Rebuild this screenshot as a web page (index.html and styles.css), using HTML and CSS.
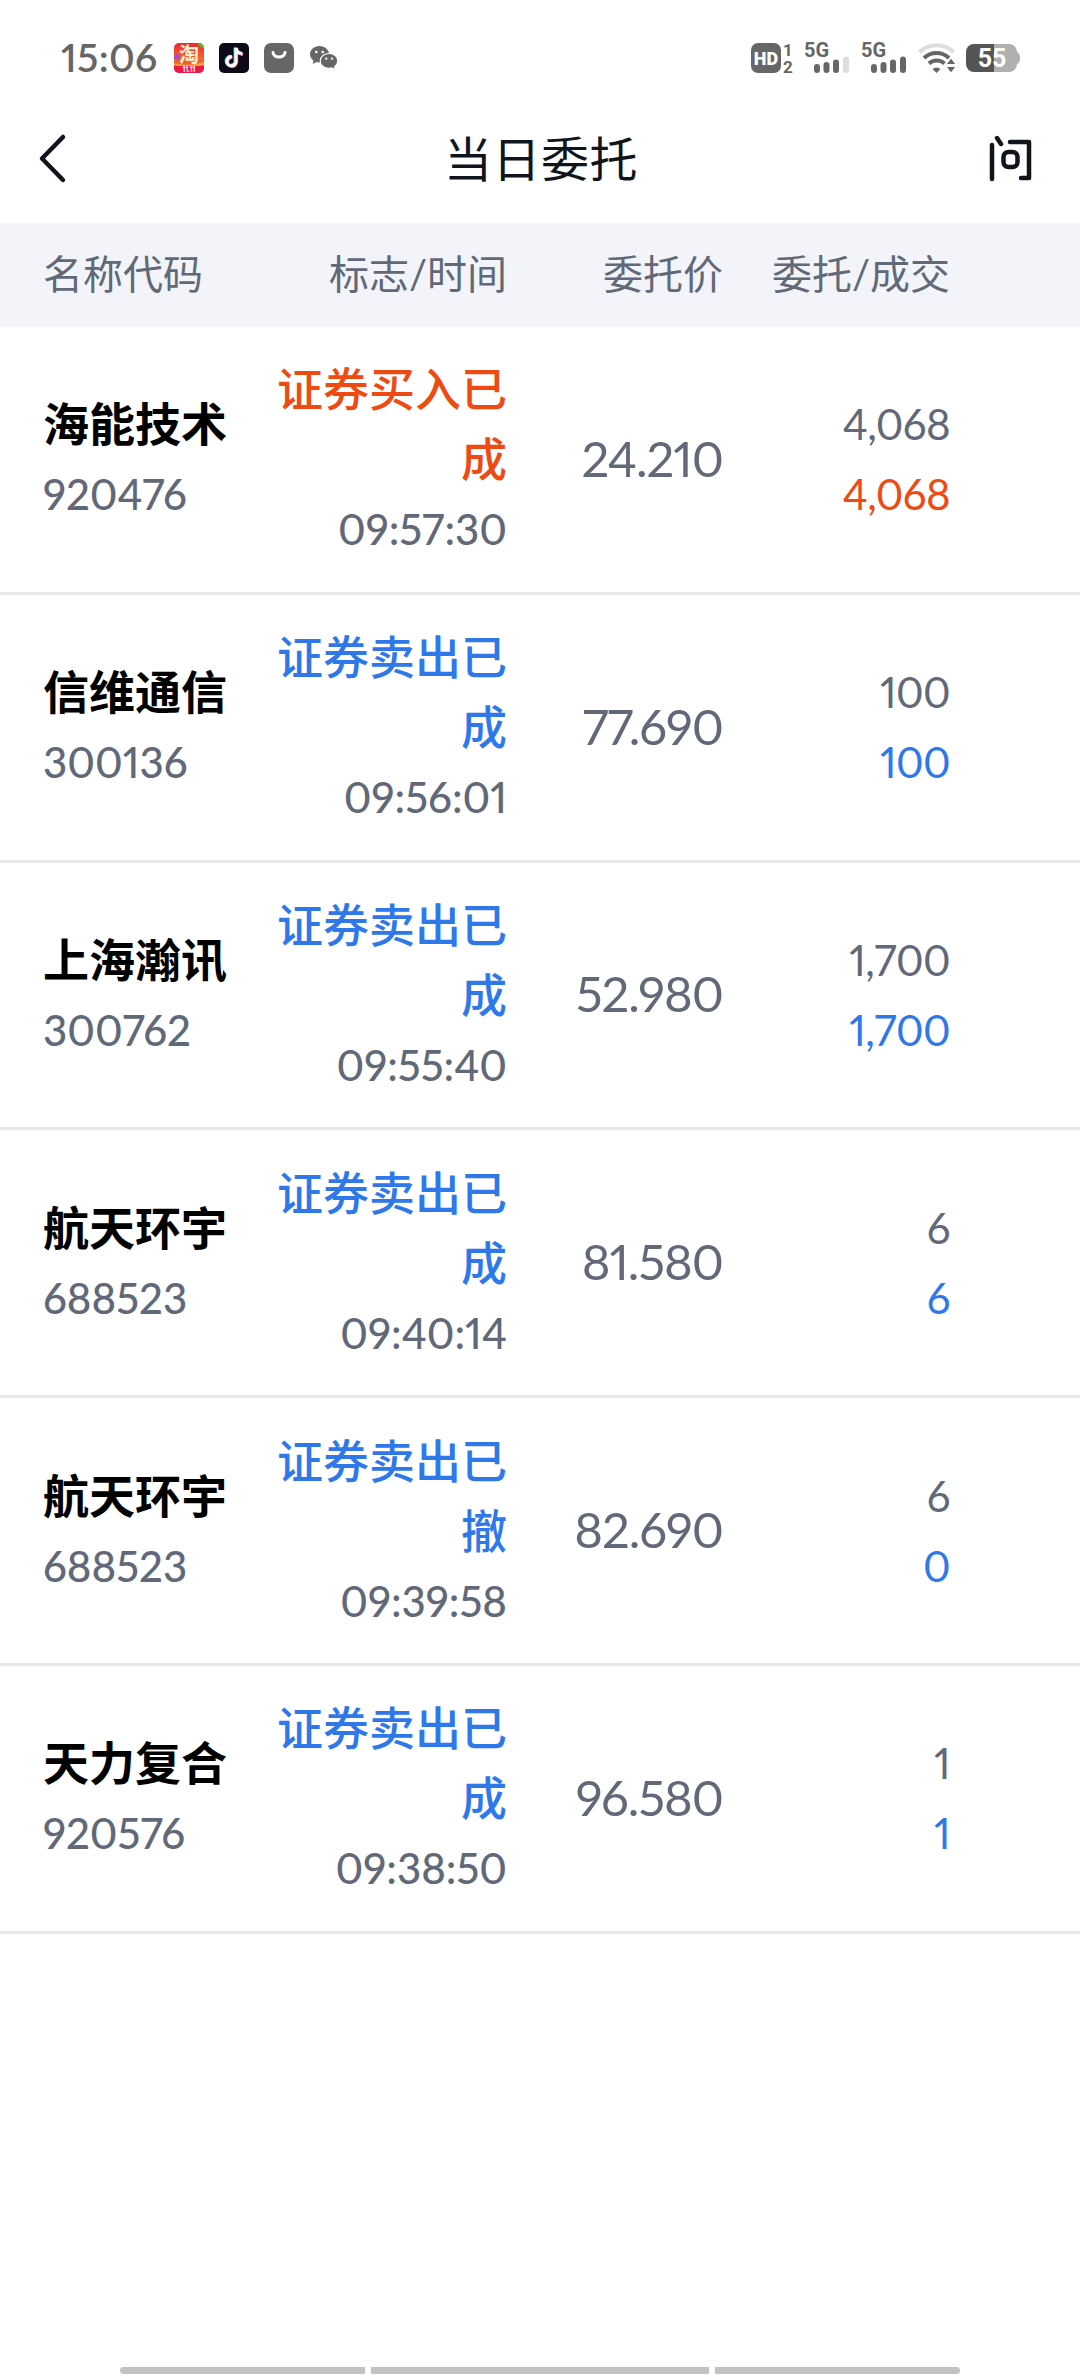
FILE: index.html
```
<!DOCTYPE html>
<html lang="zh-CN">
<head>
  <meta charset="UTF-8" />
  <meta name="viewport" content="width=device-width, initial-scale=1" />
  <title>当日委托</title>
  <link rel="stylesheet" href="styles.css">
</head>
<body>
  <div class="status-bar">
    <span class="clock">15:06</span>
    <div class="apps">
      <svg class="app" viewBox="0 0 30 30">
        <defs>
          <linearGradient id="sale" x1="0" y1="0" x2="0" y2="1">
            <stop offset="0" stop-color="#f0262f" />
            <stop offset="0.55" stop-color="#f5682a" />
            <stop offset="0.76" stop-color="#e8552f" />
          </linearGradient>
        </defs>
        <rect width="30" height="30" rx="5" fill="url(#sale)" />
        <circle cx="3" cy="14" r="3" fill="#b04bc8" />
        <path d="M24 0h1a5 5 0 0 1 5 5c-3 0-6-2-6-5z" fill="#62b32c" />
        <path d="M0 20q15 4 30-1v3q-15 4-30 0z" fill="#f9a33c" />
        <path d="M0 23h30v2a5 5 0 0 1-5 5H5a5 5 0 0 1-5-5z" fill="#ed1848" />
        <text class="tao" x="15" y="19">淘</text>
        <text class="sale" x="15" y="29">11.11</text>
      </svg>
      <svg class="app" viewBox="0 0 30 30">
        <rect width="30" height="30" rx="5" fill="#0b0a16" />
        <g fill="none" stroke-width="3.2">
          <path d="M12.200 13.500a4.500 4.500 0 1 0 4 4.500V4.500c.5 3.500 3 5.500 6.500 6" stroke="#25f4ee" />
          <path d="M13.700 14.500a4.500 4.500 0 1 0 4 4.500V5.500c.5 3.500 3 5.500 6.500 6" stroke="#fe2c55" />
          <path d="M13 14a4.500 4.500 0 1 0 4 4.500V5c.5 3.500 3 5.500 6.500 6" stroke="#fff" />
        </g>
      </svg>
      <svg class="app" viewBox="0 0 30 30">
        <rect width="30" height="30" rx="7" fill="#666" />
        <path d="M9 9.500c1 6 11 6 12 0" fill="none" stroke="#fff" stroke-width="3" stroke-linecap="round" />
      </svg>
      <svg class="app" viewBox="0 0 30 30">
        <path d="M10.500 3C5 3 1 6.800 1 11.200c0 2.600 1.300 4.800 3.500 6.300L3.700 21l3.800-2c1 .3 2 .4 3 .4 5.300 0 9.500-3.700 9.500-8.200S16 3 10.500 3z" fill="#666" />
        <path d="M20 10.500c-5 0-8.800 3.300-8.800 7.400s3.800 7.400 8.800 7.400c1 0 2-.1 2.800-.4l3.600 1.900-.8-3.100c1.900-1.400 3.200-3.400 3.200-5.800 0-4.100-3.800-7.400-8.800-7.400z" fill="#666" stroke="#fff" stroke-width="1.200" />
        <g fill="#fff">
          <circle cx="7.300" cy="9" r="1.300" />
          <circle cx="13.700" cy="9" r="1.300" />
          <circle cx="17.300" cy="15.700" r="1.100" />
          <circle cx="23" cy="15.700" r="1.100" />
        </g>
      </svg>
    </div>

    <div class="signals">
      <svg class="hd" viewBox="0 0 44 40">
        <rect y="5" width="30" height="30" rx="7" fill="#666" />
        <text class="hd-label" x="15" y="26.500">HD</text>
        <text class="sim" x="36.500" y="17.500">1</text>
        <text class="sim" x="37" y="34.500">2</text>
      </svg>
      <svg class="cell" viewBox="0 0 46 40">
        <text class="net" x="0" y="19">5G</text>
        <g fill="#666">
          <rect x="10" y="26" width="6" height="9" rx="3" />
          <rect x="19.500" y="24" width="6" height="11" rx="3" />
          <rect x="29" y="21.500" width="6" height="13.500" rx="3" />
          <rect x="39" y="18.500" width="6" height="16.500" rx="3" fill="#ddd" />
        </g>
      </svg>
      <svg class="cell" viewBox="0 0 46 40">
        <text class="net" x="0" y="19">5G</text>
        <g fill="#666">
          <rect x="10" y="26" width="6" height="9" rx="3" />
          <rect x="19.500" y="24" width="6" height="11" rx="3" />
          <rect x="29" y="21.500" width="6" height="13.500" rx="3" />
          <rect x="39" y="18.500" width="6" height="16.500" rx="3" />
        </g>
      </svg>
      <svg class="wifi" viewBox="0 0 38 30">
        <g fill="none" stroke-width="4">
          <path d="M1.500 9a25 25 0 0 1 34 0" stroke="#ddd" />
          <path d="M6 15a18 18 0 0 1 25 0" stroke="#666" />
          <path d="M11 20.500a11.500 11.500 0 0 1 15.500 0" stroke="#666" />
        </g>
        <path d="M14.500 26q4-3 8 0l-4 4z" fill="#666" />
        <path d="M33 15l5 6.500H28z" fill="#666" stroke="#fff" />
        <path d="M33 30l5-6.500H28z" fill="#666" stroke="#fff" />
      </svg>
      <svg class="battery" viewBox="0 0 54 28">
        <path d="M28 0h15a8 8 0 0 1 8 8v12a8 8 0 0 1-8 8H28z" fill="#b0b0b0" />
        <path d="M51 8q3 1 3 6t-3 6z" fill="#b0b0b0" />
        <path d="M28 0H8a8 8 0 0 0-8 8v12a8 8 0 0 0 8 8h20z" fill="#555" />
        <text class="level" x="26" y="23">55</text>
      </svg>
    </div>
  </div>

  <header>
    <svg class="back" viewBox="0 0 28 48">
      <path d="M25 3L4 24.500 25 46" />
    </svg>
    <h1>当日委托</h1>
    <svg class="ask" viewBox="0 0 44 48">
      <path d="M4 11v34M9 4l4 6M22 8h19v36h-8" />
      <rect x="15.500" y="18" width="14" height="15" rx="5" />
    </svg>
  </header>

  <div class="row head">
    <span>名称代码</span>
    <span>标志/时间</span>
    <span>委托价</span>
    <span>委托/成交</span>
  </div>

  <div class="row buy">
    <div><p class="name">海能技术</p><p>920476</p></div>
    <div><p class="flag">证券买入已成</p><p>09:57:30</p></div>
    <div class="price">24.210</div>
    <div class="amount"><p>4,068</p><p class="deal">4,068</p></div>
  </div>
  <div class="row sell">
    <div><p class="name">信维通信</p><p>300136</p></div>
    <div><p class="flag">证券卖出已成</p><p>09:56:01</p></div>
    <div class="price">77.690</div>
    <div class="amount"><p>100</p><p class="deal">100</p></div>
  </div>
  <div class="row sell">
    <div><p class="name">上海瀚讯</p><p>300762</p></div>
    <div><p class="flag">证券卖出已成</p><p>09:55:40</p></div>
    <div class="price">52.980</div>
    <div class="amount"><p>1,700</p><p class="deal">1,700</p></div>
  </div>
  <div class="row sell">
    <div><p class="name">航天环宇</p><p>688523</p></div>
    <div><p class="flag">证券卖出已成</p><p>09:40:14</p></div>
    <div class="price">81.580</div>
    <div class="amount"><p>6</p><p class="deal">6</p></div>
  </div>
  <div class="row sell">
    <div><p class="name">航天环宇</p><p>688523</p></div>
    <div><p class="flag">证券卖出已撤</p><p>09:39:58</p></div>
    <div class="price">82.690</div>
    <div class="amount"><p>6</p><p class="deal">0</p></div>
  </div>
  <div class="row sell">
    <div><p class="name">天力复合</p><p>920576</p></div>
    <div><p class="flag">证券卖出已成</p><p>09:38:50</p></div>
    <div class="price">96.580</div>
    <div class="amount"><p>1</p><p class="deal">1</p></div>
  </div>

  <div class="nav-hint">
    <i></i>
    <i></i>
    <i></i>
  </div>
</body>
</html>
```
FILE: styles.css
```
* {
  box-sizing: border-box;
}
body {
  margin: 0;
  height: 2376px;
  display: flex;
  flex-direction: column;
  background-color: #fff;
  color: #616878;
  font-family: Lato, "Noto Sans CJK SC", sans-serif;
  font-variant-numeric: proportional-nums;
  overflow: hidden;
}
p {
  margin: 0;
}
svg {
  display: block;
  flex: none;
  overflow: visible;
}

/* system status bar */
.status-bar {
  height: 96px;
  padding: 20px 60px 0 61px;
  display: flex;
  align-items: center;
  color: #666;
}
.clock {
  width: 113px;
  padding-bottom: 2px;
  font-size: 39px;
  font-weight: 600;
  letter-spacing: 0.3px;
}
.apps {
  display: flex;
  gap: 15px;
}
.app {
  width: 30px;
  height: 30px;
}
.tao {
  font-size: 20px;
  font-weight: 700;
  fill: #fff3d8;
  text-anchor: middle;
}
.sale {
  font-size: 7px;
  font-weight: 900;
  fill: #fff;
  text-anchor: middle;
}
.signals {
  margin-left: auto;
  display: flex;
  align-items: center;
}
.signals text {
  font-family: Roboto, sans-serif;
  font-weight: 700;
  fill: #666;
}
.hd {
  width: 44px;
  height: 40px;
  margin-right: 9px;
}
.signals .hd-label {
  font-size: 18px;
  font-weight: 900;
  fill: #fff;
  text-anchor: middle;
}
.sim {
  font-size: 17px;
  text-anchor: middle;
}
.cell {
  width: 46px;
  height: 40px;
  margin-right: 11px;
}
.net {
  font-size: 20px;
}
.wifi {
  width: 38px;
  height: 30px;
  margin-right: 10px;
}
.battery {
  width: 54px;
  height: 28px;
}
.signals .level {
  font-size: 25px;
  fill: #fff;
  text-anchor: middle;
}

header {
  height: 127px;
  padding: 0 48px 3px 38px;
  display: grid;
  grid-template-columns: 44px 1fr 44px;
  align-items: center;
}
.back {
  width: 28px;
  height: 48px;
}
.ask {
  width: 44px;
  height: 48px;
}
.back path,
.ask path,
.ask rect {
  fill: none;
  stroke: #10151c;
  stroke-width: 4.5;
  stroke-linecap: round;
  stroke-linejoin: round;
}
h1 {
  margin: 0;
  padding: 0 0 5px 12px;
  font-size: 48px;
  font-weight: 400;
  letter-spacing: 0.5px;
  text-align: center;
  color: #10151c;
}

/* order table */
.row {
  height: 267.800px;
  padding-left: 43px;
  display: grid;
  grid-template-columns: 184px 280px 216px 227px;
  align-items: center;
  text-align: right;
  border-bottom: 3px solid #e5e8ec;
  font-size: 42px;
  font-weight: 500;
  line-height: 70px;
}
.row > :first-child {
  text-align: left;
}
.head {
  height: 104px;
  padding-bottom: 2px;
  border: none;
  background-color: #f2f4f9;
  font-size: 40px;
  font-weight: 400;
}
.head span {
  white-space: nowrap;
}
.name {
  color: #000;
  font-size: 46px;
  font-weight: 700;
}
.flag {
  padding-left: 48px;
  font-size: 46px;
  font-weight: 500;
}
.price {
  padding-bottom: 3px;
  font-size: 49px;
  font-weight: 400;
  letter-spacing: -1px;
}
.amount {
  font-weight: 400;
  letter-spacing: -0.6px;
}
.buy .flag,
.buy .deal {
  color: #ee4a12;
}
.sell .flag,
.sell .deal {
  color: #2f78ea;
}

/* gesture bar */
.nav-hint {
  margin: auto 120px 0;
  padding-bottom: 2px;
  display: flex;
  gap: 6px;
}
.nav-hint i {
  width: 245px;
  height: 7px;
  background-color: #c2c2c2;
}
.nav-hint i:nth-child(2) {
  width: 338px;
}
.nav-hint i:first-child {
  border-radius: 4px 0 0 4px;
}
.nav-hint i:last-child {
  border-radius: 0 4px 4px 0;
}
```
